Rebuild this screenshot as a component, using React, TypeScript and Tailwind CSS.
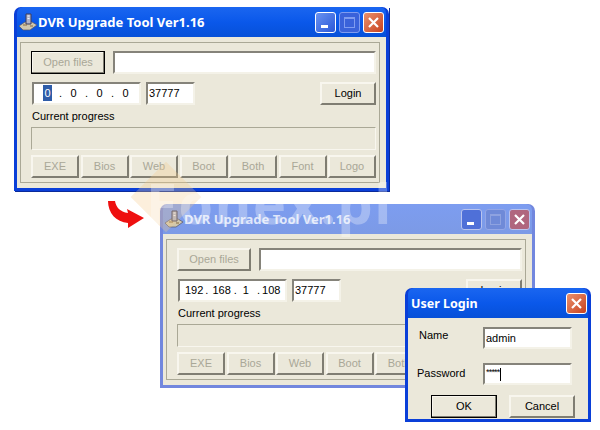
import type { ReactNode } from "react"

function ToolIcon({ className }: { className?: string }) {
  return (
    <svg viewBox="0 0 18 18" className={className}>
      <path d="M0 13 L6 9 H13 L18 12 L11 17 H4 Z" fill="#cfc7ae" stroke="#55566a" strokeWidth="0.7" />
      <path d="M7 1 H12 V11 H7 Z" fill="#aeb2c8" stroke="#3c3c5c" strokeWidth="1" />
      <path d="M8.5 3 H10.5 M8.5 5.5 H10.5" stroke="#f0f0f8" strokeWidth="1" />
      <path d="M4 12 H8 M11 13 H14" stroke="#8a6a3a" strokeWidth="1.2" />
    </svg>
  )
}

function CaptionButton({ kind, dim }: { kind: "min" | "max" | "close"; dim?: boolean }) {
  if (kind === "close") {
    return (
      <div className={dim ? "w-[21px] h-[21px] rounded-[3px] border border-[#b9c4ee] bg-[#b0667e] flex items-center justify-center" : "w-[21px] h-[21px] rounded-[3px] border border-white bg-gradient-to-br from-[#e8906c] to-[#c8401c] flex items-center justify-center"}>
        <svg viewBox="0 0 13 13" className="w-[13px] h-[13px]">
          <path d="M2 2 L11 11 M11 2 L2 11" stroke="white" strokeWidth="2.2" />
        </svg>
      </div>
    )
  }
  if (kind === "min") {
    return (
      <div className={dim ? "w-[21px] h-[21px] rounded-[3px] border border-[#b9c4ee] bg-[#4f70d8] flex items-end pl-[5px] pb-[4px]" : "w-[21px] h-[21px] rounded-[3px] border border-white bg-gradient-to-br from-[#6a92f0] to-[#2a56d8] flex items-end pl-[5px] pb-[4px]"}>
        <div className="w-[7px] h-[3px] bg-white" />
      </div>
    )
  }
  return (
    <div className={dim ? "w-[21px] h-[21px] rounded-[3px] border border-[#93a6e6] bg-[#6f8ad8] flex items-center justify-center" : "w-[21px] h-[21px] rounded-[3px] border border-[#7f9cf0] bg-[#3a62da] flex items-center justify-center"}>
      <div className={dim ? "w-[11px] h-[11px] border border-[#8ea2e0] border-t-2" : "w-[11px] h-[11px] border border-[#7f9cf0] border-t-2"} />
    </div>
  )
}

function Sunken({ className, children }: { className: string; children?: ReactNode }) {
  return (
    <div className={`bg-white border-2 border-t-[#85837a] border-l-[#85837a] border-r-[#f4f2e8] border-b-[#f4f2e8] flex items-center ${className}`}>
      {children}
    </div>
  )
}

function RaisedButton({ className, label, disabled, primary }: { className: string; label: string; disabled?: boolean; primary?: boolean }) {
  const edge = primary
    ? "border border-black shadow-[inset_-1px_-1px_0_#7f7d72,inset_1px_1px_0_#f8f6ee]"
    : "border-2 border-t-[#f8f6ee] border-l-[#f8f6ee] border-r-[#7f7d72] border-b-[#7f7d72]"
  const text = disabled ? "text-[#a9a797]" : "text-black"
  return (
    <div className={`bg-[#ebe8da] ${edge} ${text} flex items-center justify-center text-[11px] ${className}`}>
      {label}
    </div>
  )
}

function DvrWindow({ ip, inactive }: { ip: ReactNode; inactive?: boolean }) {
  const rowButtons = ["EXE", "Bios", "Web", "Boot", "Both", "Font", "Logo"]
  return (
    <div className={inactive ? "w-[375px] h-[184px] rounded-t-[7px] bg-[#7287de] flex flex-col p-[3px] pt-0" : "w-[375px] h-[184px] rounded-t-[7px] bg-[#0a3fd8] flex flex-col p-[3px] pt-0"}>
      <div className={inactive ? "h-[30px] shrink-0 flex items-center pl-[2px] pr-[2px] rounded-t-[6px] bg-gradient-to-b from-[#7d9df0] to-[#7c9ae6]" : "h-[30px] shrink-0 flex items-center pl-[2px] pr-[2px] rounded-t-[6px] bg-gradient-to-b from-[#1a66f0] via-[#0a58ea] to-[#0650d8]"}>
        <ToolIcon className="w-[18px] h-[18px] shrink-0" />
        <span className={inactive ? "ml-[1px] mt-[2px] text-[#dfe6fa] font-['Noto_Sans',sans-serif] font-bold text-[13px]" : "ml-[1px] mt-[2px] text-white font-['Noto_Sans',sans-serif] font-bold text-[13px]"}>
          DVR Upgrade Tool Ver1.16
        </span>
        <div className="ml-auto flex gap-[3px]">
          <CaptionButton kind="min" dim={inactive} />
          <CaptionButton kind="max" dim={inactive} />
          <CaptionButton kind="close" dim={inactive} />
        </div>
      </div>
      <div className="flex-1 bg-[#ebe8da] pt-[5px] pl-[3px] pr-[6px] pb-[5px] flex">
        <div className="flex-1 border border-[#aaa896] pl-[10px] pr-[3px] pt-[8px] flex flex-col">
          <div className="flex gap-[8px]">
            <RaisedButton className="w-[74px] h-[23px]" label="Open files" disabled primary={!inactive} />
            <Sunken className="w-[263px] h-[23px]" />
          </div>
          <div className="flex mt-[8px] items-center">
            <Sunken className="ml-[1px] w-[109px] h-[23px] text-[11px] text-black">{ip}</Sunken>
            <Sunken className="ml-[5px] w-[49px] h-[23px] text-[11px] text-black pl-[1px]">37777</Sunken>
            <RaisedButton className="ml-auto w-[56px] h-[23px]" label="Login" />
          </div>
          <div className="text-[11px] leading-none text-black mt-[6px] ml-[1px]">Current progress</div>
          <div className="mt-[5px] w-[345px] h-[23px] bg-[#ebe8da] border border-[#aaa896] border-b-[#f8f6ee] border-r-[#f8f6ee]" />
          <div className="flex justify-between w-[345px] mt-[5px]">
            {rowButtons.map((b) => (
              <RaisedButton key={b} className="w-[48px] h-[23px]" label={b} disabled />
            ))}
          </div>
        </div>
      </div>
    </div>
  )
}

function LoginDialog() {
  return (
    <div className="w-[186px] h-[134px] rounded-t-[7px] bg-[#0a3fd8] p-[3px] pt-0 flex flex-col">
      <div className="h-[30px] shrink-0 flex items-center pl-[3px] pr-[1px] rounded-t-[6px] bg-gradient-to-b from-[#1a66f0] via-[#0a58ea] to-[#0650d8]">
        <span className="mt-[2px] text-white font-['Noto_Sans',sans-serif] font-bold text-[12.5px]">User Login</span>
        <div className="ml-auto"><CaptionButton kind="close" /></div>
      </div>
      <div className="flex-1 bg-[#ebe8da] flex flex-col pt-[9px] text-[11px] text-black">
        <div className="flex items-center h-[22px]">
          <span className="ml-[11px] w-[64px] mb-[6px]">Name</span>
          <Sunken className="w-[89px] h-[22px] pl-[1px]">admin</Sunken>
        </div>
        <div className="flex items-center h-[22px] mt-[14px]">
          <span className="ml-[9px] w-[66px] mb-[2px]">Password</span>
          <Sunken className="w-[89px] h-[22px] pl-[1px]">
            <span className="text-[9px] tracking-[-0.8px] leading-none mb-[3px]">*****</span>
            <span className="w-px h-[13px] bg-black" />
          </Sunken>
        </div>
        <div className="flex mt-[10px]">
          <RaisedButton className="ml-[23px] w-[66px] h-[23px]" label="OK" primary />
          <RaisedButton className="ml-[12px] w-[66px] h-[23px]" label="Cancel" />
        </div>
      </div>
    </div>
  )
}

export default function App() {
  return (
    <div className="relative w-[600px] h-[430px] bg-white overflow-hidden font-['Liberation_Sans',sans-serif]">
      {/* windows on the canvas */}
      <div className="absolute left-[14px] top-[7px] shadow-[1px_1px_0_#0a2a9a]">
        <DvrWindow
          ip={
            <span className="flex pl-[7px]">
              <span className="w-[13px] text-center"><span className="bg-[#2e5ca8] text-white px-px py-[2px]">0</span></span>
              <span className="w-[13px] text-center">.</span>
              <span className="w-[13px] text-center">0</span>
              <span className="w-[13px] text-center">.</span>
              <span className="w-[13px] text-center">0</span>
              <span className="w-[13px] text-center">.</span>
              <span className="w-[13px] text-center">0</span>
            </span>
          }
        />
      </div>

      {/* red arrow */}
      <svg viewBox="0 0 40 32" className="absolute left-[106px] top-[198px] w-[40px] h-[32px]">
        <path d="M2 3 H9 C10 9 14 14 22 15 L21 11 L38 20 L22 30 L22 25 C10 24 2 15 2 3 Z" fill="#ee1010" />
      </svg>

      <div className="absolute left-[160px] top-[204px]">
        <DvrWindow
          inactive
          ip={
            <span className="flex pl-[5px]">
              <span>192</span>
              <span className="ml-[2px]">.</span>
              <span className="ml-[4px]">168</span>
              <span className="ml-[3px]">.</span>
              <span className="ml-[6px]">1</span>
              <span className="ml-[8px]">.</span>
              <span className="ml-[2px]">108</span>
            </span>
          }
        />
      </div>

      {/* watermark over the windows */}
      <div className="absolute left-[141px] top-[172px] w-[50px] h-[50px] rotate-45 bg-[#f5c98a] opacity-30" />
      <div className="absolute left-[146px] top-[174px] text-white opacity-30 font-['Noto_Sans',sans-serif] font-bold text-[56px] leading-none tracking-[1.5px]">Fonex.pl</div>

      <div className="absolute left-[405px] top-[288px]">
        <LoginDialog />
      </div>
    </div>
  )
}
